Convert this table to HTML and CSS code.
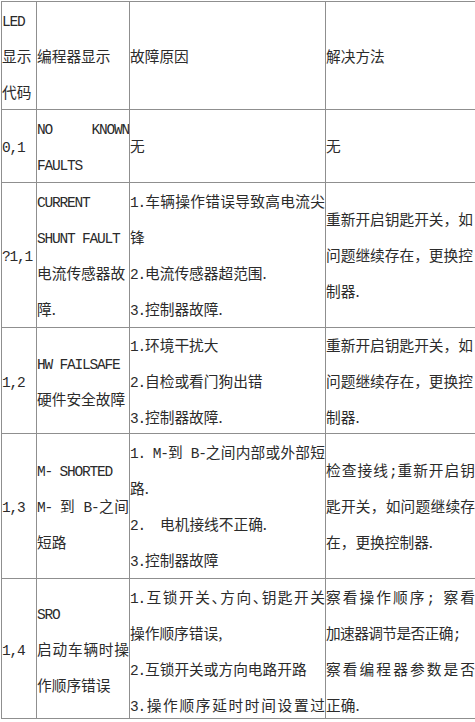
FILE: index.html
```html
<!DOCTYPE html>
<html lang="zh-CN">
<head>
<meta charset="utf-8">
<title>故障代码表</title>
<link rel="stylesheet" href="styles.css">
</head>
<body>
<div class="sheet">
  <div class="grid">
    <div class="cell"><div><span class="en">LED</span><br>显示<br>代码</div></div>
    <div class="cell"><div>编程器显示</div></div>
    <div class="cell"><div>故障原因</div></div>
    <div class="cell"><div>解决方法</div></div>

    <div class="cell"><div><span class="en">0,1</span></div></div>
    <div class="cell"><div><span class="fill"><span class="en">NO KNOWN</span></span><span class="en">FAULTS</span></div></div>
    <div class="cell"><div>无</div></div>
    <div class="cell"><div>无</div></div>

    <div class="cell"><div><span class="en">?1,1</span></div></div>
    <div class="cell"><div><span class="en">CURRENT</span><br><span class="en">SHUNT FAULT</span><br>电流传感器故<br>障.</div></div>
    <div class="cell"><div><span class="fill"><span class="en">1.</span>车辆操作错误导致高电流尖</span>锋<br><span class="en">2.</span>电流传感器超范围.<br><span class="en">3.</span>控制器故障.</div></div>
    <div class="cell"><div>重新开启钥匙开关，如<br>问题继续存在，更换控<br>制器.</div></div>

    <div class="cell"><div><span class="en">1,2</span></div></div>
    <div class="cell"><div><span class="en">HW FAILSAFE</span><br>硬件安全故障</div></div>
    <div class="cell"><div><span class="en">1.</span>环境干扰大<br><span class="en">2.</span>自检或看门狗出错<br><span class="en">3.</span>控制器故障.</div></div>
    <div class="cell"><div>重新开启钥匙开关，如<br>问题继续存在，更换控<br>制器.</div></div>

    <div class="cell"><div><span class="en">1,3</span></div></div>
    <div class="cell"><div><span class="en">M- SHORTED</span><br><span class="fill"><span class="en">M- </span>到<span class="en"> B-</span>之间</span>短路</div></div>
    <div class="cell"><div><span class="fill"><span class="en">1. M-</span>到<span class="en"> B-</span>之间内部或外部短</span>路.<br><span class="en">2.&nbsp;&nbsp;</span>电机接线不正确.<br><span class="en">3.</span>控制器故障</div></div>
    <div class="cell"><div><span class="fill">检查接线<span class="en">;</span>重新开启钥</span><span class="fill">匙开关，如问题继续存</span>在，更换控制器.</div></div>

    <div class="cell"><div><span class="en">1,4</span></div></div>
    <div class="cell"><div><span class="en">SRO</span><br><span class="fill">启动车辆时操</span>作顺序错误</div></div>
    <div class="cell top"><div><span class="fill"><span class="en">1.</span>互锁开关<span class="h">、</span>方向<span class="h">、</span>钥匙开关</span>操作顺序错误,<br><span class="en">2.</span>互锁开关或方向电路开路<br><span class="fill"><span class="en">3.</span>操作顺序延时时间设置过</span></div></div>
    <div class="cell top"><div><span class="fill">察看操作顺序<span class="en">; </span>察看</span><span class="tight">加速器调节是否正确<span class="en">;</span></span><br><span class="fill">察看编程器参数是否</span>正确.</div></div>
  </div>
</div>
</body>
</html>
```

FILE: styles.css
```css
html, body {
  margin: 0;
  padding: 0;
  overflow: hidden;
  background: #ffffff;
}

.sheet {
  padding: 1px 0 0 1px;
}

.grid {
  display: grid;
  grid-template-columns: 35px 93px 196px 150px;
  grid-template-rows: 108px 73px 145px 106px 145px 140px;
  width: 474px;
  border-bottom: 1px solid #8f8f8f;
  font-family: "Noto Sans CJK SC", sans-serif;
  font-size: 14.7px;
  line-height: 36px;
  color: #2b2b2b;
}

.cell {
  border-left: 1px solid #8f8f8f;
  border-top: 1px solid #8f8f8f;
  display: flex;
  flex-direction: column;
  justify-content: center;
  overflow: hidden;
  text-align: left;
}

.cell.top {
  justify-content: flex-start;
}

.fill {
  display: block;
  text-align: justify;
  text-align-last: justify;
}

.en {
  font-family: "Liberation Mono", monospace;
  font-size: 14.5px;
  letter-spacing: -1.2px;
  line-height: 1;
}

.h {
  display: inline-block;
  width: 0.5em;
}

.tight {
  letter-spacing: -0.6px;
}
```
